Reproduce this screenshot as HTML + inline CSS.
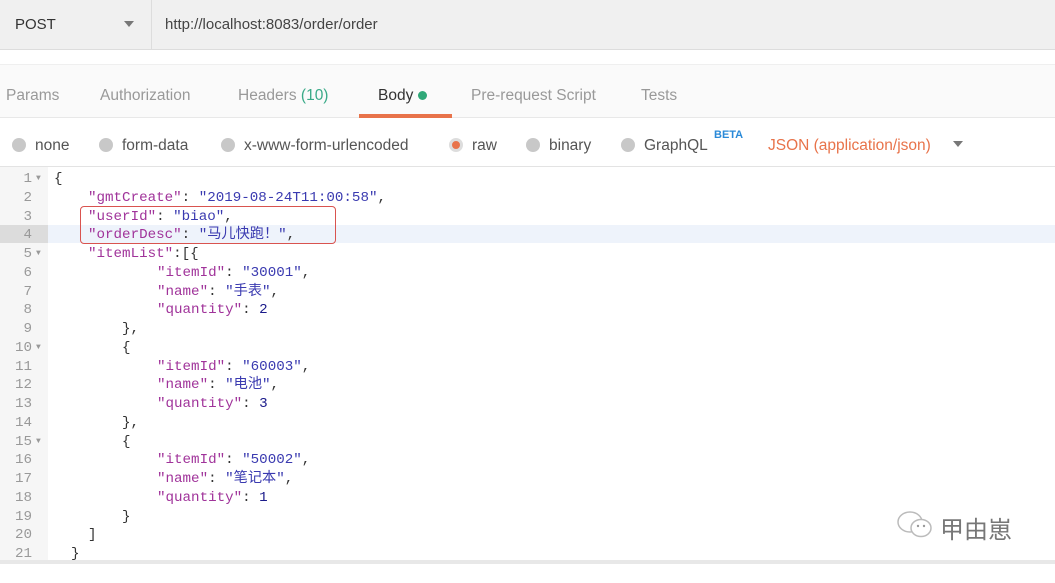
<!DOCTYPE html>
<html><head><meta charset="utf-8"><style>
*{margin:0;padding:0;box-sizing:border-box}
body{width:1055px;height:564px;overflow:hidden;background:#fff;font-family:"Liberation Sans","Noto Sans CJK SC",sans-serif;position:relative}
.top{position:absolute;left:0;top:0;width:1055px;height:50px;background:#f0f0f0;border-bottom:1px solid #ddd}
.method{position:absolute;left:0;top:0;width:152px;height:50px;border-right:1px solid #ddd;}
.method span{position:absolute;left:15px;top:16px;font-size:15px;color:#333}
.method i{position:absolute;left:124px;top:21px;border-left:5px solid transparent;border-right:5px solid transparent;border-top:6px solid #777}
.url{position:absolute;left:165px;top:16px;font-size:15px;color:#444}
.tabs{position:absolute;left:0;top:64px;width:1055px;height:54px;background:#fafafa;border-top:1px solid #efefef;border-bottom:1px solid #e8e8e8}
.tab{position:absolute;top:22px;font-size:15.5px;color:#999}
.opts{position:absolute;top:137px;font-size:15.5px;color:#555}
.rd{position:absolute;top:138px;width:14px;height:14px;border-radius:50%;background:#c8c8c8}
.sep{position:absolute;left:0;top:166px;width:1055px;height:1px;background:#e3e3e3}
.gut{position:absolute;left:0;top:167px;width:48px;height:393px;background:#f6f6f6}
.code{position:absolute;left:0;top:170px;font-family:"Liberation Mono","Noto Sans CJK SC",monospace;font-size:14.2px;line-height:18.75px;white-space:pre}
.ln{position:absolute;left:0;width:32px;text-align:right;color:#999}
.ar{position:absolute;left:36px;color:#999;font-size:8px}
.t{position:absolute;color:#333}
.k{color:#a0339a}.v{color:#3a3ab0}.n{color:#1a1a8a}
.bot{position:absolute;left:0;top:560px;width:1055px;height:4px;background:#e8e8e8}
</style></head><body>
<div class="top"><div class="method"><span>POST</span><i></i></div><div class="url">http://localhost:8083/order/order</div></div>
<div class="tabs">
<span class="tab" style="left:6px">Params</span>
<span class="tab" style="left:100px">Authorization</span>
<span class="tab" style="left:238px">Headers <span style="color:#3aaa88">(10)</span></span>
<span class="tab" style="left:378px;color:#333">Body <span style="display:inline-block;width:9px;height:9px;border-radius:50%;background:#2fa878"></span></span>
<div style="position:absolute;left:359px;top:49px;width:93px;height:4px;background:#e8734a"></div>
<span class="tab" style="left:471px">Pre-request Script</span>
<span class="tab" style="left:641px">Tests</span>
</div>
<span class="rd" style="left:12px"></span><span class="opts" style="left:35px">none</span>
<span class="rd" style="left:99px"></span><span class="opts" style="left:122px">form-data</span>
<span class="rd" style="left:221px"></span><span class="opts" style="left:244px">x-www-form-urlencoded</span>
<span class="rd" style="left:449px;background:#e8734a;border:3px solid #ddd"></span><span class="opts" style="left:472px">raw</span>
<span class="rd" style="left:526px"></span><span class="opts" style="left:549px">binary</span>
<span class="rd" style="left:621px"></span><span class="opts" style="left:644px">GraphQL</span>
<span style="position:absolute;left:714px;top:129px;font-size:11px;font-weight:bold;color:#2a8ad8">BETA</span>
<span class="opts" style="left:768px;color:#e8734a">JSON (application/json)</span>
<span style="position:absolute;left:953px;top:141px;border-left:5px solid transparent;border-right:5px solid transparent;border-top:6px solid #777"></span>
<div class="sep"></div>
<div class="gut"></div>
<div style="position:absolute;left:0;top:225px;width:48px;height:18px;background:#dcdcdc"></div>
<div style="position:absolute;left:48px;top:225px;width:1007px;height:18px;background:#eef3fb"></div>
<div style="position:absolute;left:80px;top:206px;width:256px;height:38px;border:1.5px solid #d9534f;border-radius:4px"></div>
<div style="position:absolute;left:893px;top:507px;width:45px;height:36px">
<svg width="45" height="36" viewBox="0 0 45 36"><ellipse cx="17" cy="15" rx="12" ry="10" fill="none" stroke="#bbb" stroke-width="1.5"/><ellipse cx="28" cy="21" rx="10" ry="8.5" fill="#fff" stroke="#bbb" stroke-width="1.5"/><circle cx="25" cy="19" r="1.2" fill="#999"/><circle cx="31" cy="19" r="1.2" fill="#999"/></svg></div>
<div style="position:absolute;left:940px;top:510px;font-size:24px;color:#777;font-family:'Noto Sans CJK SC',sans-serif">甲由崽</div>
<div class="bot"></div>
<div class="code">
<span class="ln" style="top:0">1</span><span class="ar" style="top:0">▼</span><span class="t" style="top:0;left:54px">{</span>
<span class="ln" style="top:18.75px">2</span><span class="t" style="top:18.75px;left:88px"><span class="k">"gmtCreate"</span>: <span class="v">"2019-08-24T11:00:58"</span>,</span>
<span class="ln" style="top:37.5px">3</span><span class="t" style="top:37.5px;left:88px"><span class="k">"userId"</span>: <span class="v">"biao"</span>,</span>
<span class="ln" style="top:56.25px">4</span><span class="t" style="top:56.25px;left:88px"><span class="k">"orderDesc"</span>: <span class="v">"马儿快跑！"</span>,</span>
<span class="ln" style="top:75px">5</span><span class="ar" style="top:75px">▼</span><span class="t" style="top:75px;left:88px"><span class="k">"itemList"</span>:[{</span>
<span class="ln" style="top:93.75px">6</span><span class="t" style="top:93.75px;left:157px"><span class="k">"itemId"</span>: <span class="v">"30001"</span>,</span>
<span class="ln" style="top:112.5px">7</span><span class="t" style="top:112.5px;left:157px"><span class="k">"name"</span>: <span class="v">"手表"</span>,</span>
<span class="ln" style="top:131.25px">8</span><span class="t" style="top:131.25px;left:157px"><span class="k">"quantity"</span>: <span class="n">2</span></span>
<span class="ln" style="top:150px">9</span><span class="t" style="top:150px;left:122px">},</span>
<span class="ln" style="top:168.75px">10</span><span class="ar" style="top:168.75px">▼</span><span class="t" style="top:168.75px;left:122px">{</span>
<span class="ln" style="top:187.5px">11</span><span class="t" style="top:187.5px;left:157px"><span class="k">"itemId"</span>: <span class="v">"60003"</span>,</span>
<span class="ln" style="top:206.25px">12</span><span class="t" style="top:206.25px;left:157px"><span class="k">"name"</span>: <span class="v">"电池"</span>,</span>
<span class="ln" style="top:225px">13</span><span class="t" style="top:225px;left:157px"><span class="k">"quantity"</span>: <span class="n">3</span></span>
<span class="ln" style="top:243.75px">14</span><span class="t" style="top:243.75px;left:122px">},</span>
<span class="ln" style="top:262.5px">15</span><span class="ar" style="top:262.5px">▼</span><span class="t" style="top:262.5px;left:122px">{</span>
<span class="ln" style="top:281.25px">16</span><span class="t" style="top:281.25px;left:157px"><span class="k">"itemId"</span>: <span class="v">"50002"</span>,</span>
<span class="ln" style="top:300px">17</span><span class="t" style="top:300px;left:157px"><span class="k">"name"</span>: <span class="v">"笔记本"</span>,</span>
<span class="ln" style="top:318.75px">18</span><span class="t" style="top:318.75px;left:157px"><span class="k">"quantity"</span>: <span class="n">1</span></span>
<span class="ln" style="top:337.5px">19</span><span class="t" style="top:337.5px;left:122px">}</span>
<span class="ln" style="top:356.25px">20</span><span class="t" style="top:356.25px;left:88px">]</span>
<span class="ln" style="top:375px">21</span><span class="t" style="top:375px;left:71px">}</span>
</div>
</body></html>
